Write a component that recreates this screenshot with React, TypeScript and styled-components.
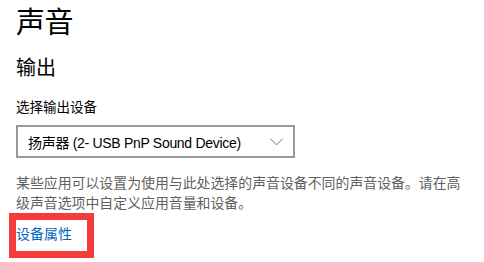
import React from "react";
import styled, { createGlobalStyle } from "styled-components";

const GlobalStyle = createGlobalStyle`
  html, body {
    margin: 0;
    padding: 0;
    background: #ffffff;
  }
  body {
    font-family: "Noto Sans CJK SC", "Noto Sans", sans-serif;
    color: #000000;
  }
`;

const Page = styled.div`
  width: 484px;
  height: 262px;
  overflow: hidden;
  padding: 0 16px;
  box-sizing: border-box;
`;

const PageTitle = styled.h1`
  margin: 0;
  font-size: 29px;
  font-weight: 400;
  line-height: 40px;
  letter-spacing: -0.5px;
`;

const SectionTitle = styled.h2`
  margin: 13px 0 0;
  font-size: 20px;
  font-weight: 400;
  line-height: 28px;
`;

const FieldLabel = styled.div`
  margin-top: 15px;
  font-size: 13.5px;
  line-height: 20px;
`;

const Select = styled.button`
  margin-top: 9px;
  width: 279px;
  height: 33px;
  box-sizing: border-box;
  display: flex;
  align-items: center;
  justify-content: space-between;
  padding: 0 10px 0 10px;
  border: 2px solid #999999;
  background: #ffffff;
  font-family: "Liberation Sans", "Noto Sans CJK SC", sans-serif;
  font-size: 14px;
  letter-spacing: -0.3px;
  color: #000000;
  cursor: pointer;
`;

const Chevron = styled.svg`
  width: 13px;
  height: 8px;
  flex: none;
`;

const Description = styled.p`
  margin: 14px 0 0;
  font-size: 13.9px;
  line-height: 20px;
  color: #5f5f5f;
  max-width: 452px;
`;

const Highlight = styled.div`
  position: relative;
  margin-top: 8px;
  display: inline-block;
`;

const Link = styled.a`
  font-size: 14px;
  line-height: 20px;
  color: #0067c0;
  text-decoration: none;
  cursor: pointer;
`;

const AnnotationFrame = styled.div`
  position: absolute;
  left: -7px;
  top: -7px;
  width: 85px;
  height: 45px;
  box-sizing: border-box;
  border: 7px solid #f63b3b;
  pointer-events: none;
`;

export default function App() {
  return (
    <>
      <GlobalStyle />
      <Page>
        <PageTitle>声音</PageTitle>
        <SectionTitle>输出</SectionTitle>
        <FieldLabel>选择输出设备</FieldLabel>
        <Select type="button">
          <span>扬声器 (2- USB PnP Sound Device)</span>
          <Chevron viewBox="0 0 13 8">
            <path d="M0.5 0.8 L6.5 6.8 L12.5 0.8" fill="none" stroke="#707070" strokeWidth="1" />
          </Chevron>
        </Select>
        <Description>
          某些应用可以设置为使用与此处选择的声音设备不同的声音设备。请在高级声音选项中自定义应用音量和设备。
        </Description>
        <Highlight>
          <Link>设备属性</Link>
          <AnnotationFrame />
        </Highlight>
      </Page>
    </>
  );
}
